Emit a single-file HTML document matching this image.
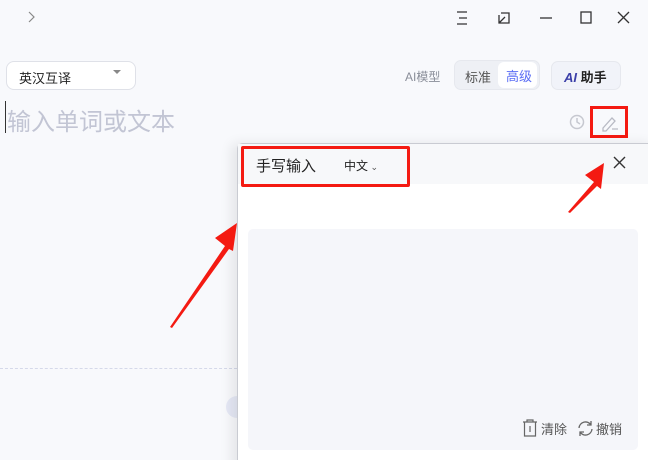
<!DOCTYPE html>
<html><head><meta charset="utf-8"><style>
*{margin:0;padding:0;box-sizing:border-box}
html,body{width:648px;height:460px;overflow:hidden}
body{background:#f8f9fc;font-family:"Liberation Sans","Noto Sans CJK SC",sans-serif;position:relative}
.a{position:absolute}
</style></head><body>
<svg class="a" style="left:26px;top:10px" width="12" height="14" fill="none" stroke="#888" stroke-width="1.2"><path d="M3 2l5 5-5 5"/></svg>
<svg class="a" style="left:450px;top:6px" width="190" height="24" fill="none" stroke="#333" stroke-width="1.3">
<path d="M7 6h10M9 12h8M7 18h10"/>
<path d="M51 7h8v10h-10v-8M49 17l6-6M49 13v4h4"/>
<path d="M90 12h12"/>
<rect x="131" y="6" width="10" height="11"/>
<path d="M168 6l11 11M179 6l-11 11"/>
</svg>
<div class="a" style="left:6px;top:61px;width:130px;height:29px;border:1px solid #dfe1e8;border-radius:8px;background:#fff;font-size:13px;color:#222;padding:6px 12px">英汉互译<span style="position:absolute;right:14px;top:8px;width:0;height:0;border-left:4px solid transparent;border-right:4px solid transparent;border-top:4px solid #888"></span></div>
<div class="a" style="left:405px;top:68px;font-size:12px;color:#8a8e99">AI模型</div>
<div class="a" style="left:454px;top:60px;width:86px;height:30px;background:#eef0f5;border-radius:7px;border:1px solid #e6e8ee"></div>
<div class="a" style="left:465px;top:67px;font-size:13px;color:#555">标准</div>
<div class="a" style="left:498px;top:62px;width:39px;height:26px;background:#fff;border-radius:6px;font-size:13px;color:#5b6ef5;padding:4px 0 0 8px">高级</div>
<div class="a" style="left:551px;top:61px;width:70px;height:29px;background:#f1f3f9;border:1px solid #e6e8ee;border-radius:7px;font-size:13px;font-weight:bold;color:#222;padding:5px 0 0 12px"><i style="color:#3b3fa8;font-style:italic">AI</i> 助手</div>
<div class="a" style="left:5px;top:101px;width:1px;height:32px;background:#333"></div>
<div class="a" style="left:7px;top:102px;font-size:24px;color:#c2c5d4">输入单词或文本</div>
<svg class="a" style="left:568px;top:113px" width="18" height="18" fill="none" stroke="#c6c8d0" stroke-width="1.5"><circle cx="9" cy="9" r="6.5"/><path d="M9 5v4l3 2"/></svg>
<svg class="a" style="left:600px;top:114px" width="20" height="18" fill="none" stroke="#b8bac4" stroke-width="1.3"><path d="M3 14l9-10 3 3-9 10H3z M12 15h6"/></svg>
<div class="a" style="left:590px;top:106px;width:38px;height:32px;border:3px solid #f41a12"></div>
<div class="a" style="left:0;top:368px;width:237px;border-top:1px dashed #d5d9ea"></div>
<div class="a" style="left:226px;top:396px;width:22px;height:22px;border-radius:50%;background:#e6e9f6"></div>
<div class="a" style="left:237px;top:143px;width:420px;height:330px;background:#fff;border:1px solid #c9cbd2;border-radius:6px;box-shadow:-6px 0 12px rgba(0,0,0,.08)">
<div style="height:40px;background:#f7f8fa"></div></div>
<div class="a" style="left:256px;top:155px;font-size:15px;color:#222">手写输入</div>
<div class="a" style="left:344px;top:157px;font-size:12px;color:#222">中文<span style="font-size:9px;color:#555"> ⌄</span></div>
<div class="a" style="left:241px;top:146px;width:169px;height:41px;border:3px solid #f41a12;border-radius:2px"></div>
<svg class="a" style="left:612px;top:155px" width="16" height="16" stroke="#333" stroke-width="1.4"><path d="M2 2l11 11M13 2L2 13"/></svg>
<div class="a" style="left:248px;top:229px;width:390px;height:221px;background:#f5f6fa;border-radius:5px"></div>
<svg class="a" style="left:521px;top:419px" width="18" height="18" fill="none" stroke="#666" stroke-width="1.2"><path d="M2 3h14M6 3V1h6v2M3.5 3v14h11V3M9 7v6"/></svg>
<div class="a" style="left:541px;top:419px;font-size:13px;color:#555">清除</div>
<svg class="a" style="left:577px;top:420px" width="17" height="17" fill="none" stroke="#666" stroke-width="1.3"><path d="M2 8a6.5 6.5 0 0 1 12-3M15 9a6.5 6.5 0 0 1-12 3M14 1v4h-4M3 16v-4h4"/></svg>
<div class="a" style="left:596px;top:419px;font-size:13px;color:#555">撤销</div>
<svg class="a" style="left:0;top:0" width="648" height="460"><polygon points="170,327 225,246 215,238 237,223 233,251 229,249 172,328" fill="#f41a12"/><polygon points="568,212 594,182 585,175 604,163 601,189 597,186 570,213" fill="#f41a12"/></svg>
</body></html>
